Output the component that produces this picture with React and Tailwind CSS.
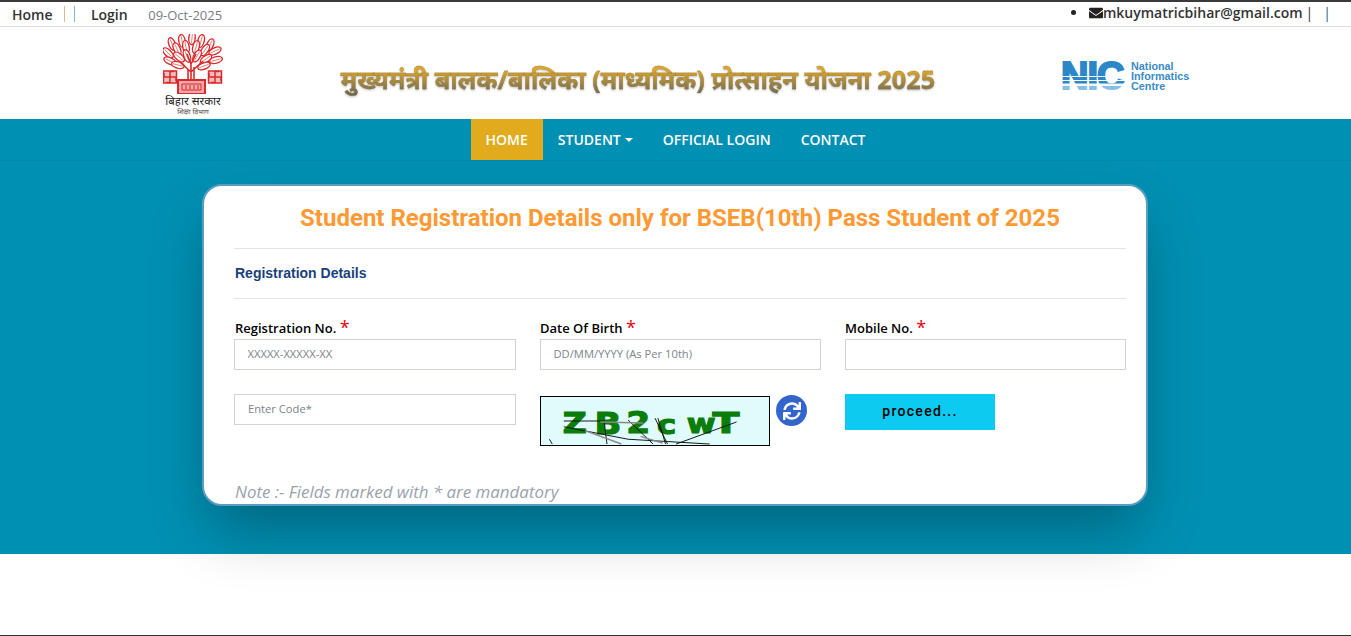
import React from 'react';
import { FaEnvelope, FaSync } from 'react-icons/fa';

const openSans = "font-['Open_Sans',sans-serif]";
const hindi = "font-['Noto_Sans','Noto_Sans_Devanagari','Lohit_Devanagari',sans-serif]";

function Emblem() {
  const leaves = [
    [9, 10, -20], [19, 7, -10], [29, 4, 5], [38, 7, 15], [47, 11, 25],
    [5, 19, -45], [14, 15, -25], [23, 13, -10], [33, 13, 15], [42, 16, 35], [52, 17, 65],
    [7, 27, -65], [16, 23, -50], [24, 22, -20], [34, 22, 30], [43, 25, 55], [53, 26, 75],
    [15, 31, -75], [41, 32, 70],
  ];
  return (
    <svg width="60" height="60" viewBox="0 0 60 60" fill="none" className="block">
      {leaves.map(([x, y, r], i) => (
        <g key={i} transform={`rotate(${r} ${x} ${y})`}>
          <ellipse cx={x} cy={y} rx="3.2" ry="6.5" fill="#fff" stroke="#d92b2b" strokeWidth="1.4" />
          <path d={`M${x} ${y - 5}V${y + 5}`} stroke="#e66" strokeWidth="0.8" />
        </g>
      ))}
      <path d="M28 47V30M28 38L17 28M28 38L40 27M25 47V35M31 47V33M28 30L24 20M28 30L33 20" stroke="#d92b2b" strokeWidth="1.6" />
      <rect x="15" y="46" width="27" height="14" fill="#f2a8a8" stroke="#d92b2b" strokeWidth="2" />
      <path d="M19 50h19v6H19zM23 51v4M27 51v4M31 51v4M35 51v4" stroke="#d92b2b" strokeWidth="1" />
      <g stroke="#d92b2b" strokeWidth="1.5">
        <rect x="0.5" y="37" width="13" height="12" fill="#f7bcbc" />
        <path d="M7 37v12M0.5 43h13M7 37.5h4M13 43v4M7 48.5H3M1 43v-4" />
        <rect x="45.5" y="37" width="13" height="12" fill="#f7bcbc" />
        <path d="M52 37v12M45.5 43h13M52 37.5h4M58 43v4M52 48.5h-4M46 43v-4" />
      </g>
    </svg>
  );
}

function NicLogo() {
  return (
    <div className="flex items-center">
      <div className="relative h-[30px] w-[71px]">
        <span className="block pl-px font-['Liberation_Sans',sans-serif] text-[38px] leading-[30px] font-bold tracking-[-1px] text-[#2b87c8] [-webkit-text-stroke:2px_#2b87c8]">
          NIC
        </span>
        <div className="absolute inset-x-0 top-[15px] flex flex-col gap-[3px]">
          <div className="h-px bg-white" />
          <div className="h-px bg-white" />
          <div className="h-[2px] bg-white/90" />
        </div>
        <div className="absolute inset-x-0 bottom-0 h-[8px] bg-white/45" />
      </div>
      <div className="font-['Liberation_Sans',sans-serif] text-[10.8px] leading-[10px] font-bold text-[#3b8bc6]">
        <div>National</div>
        <div>Informatics</div>
        <div>Centre</div>
      </div>
    </div>
  );
}

function Captcha() {
  return (
    <svg width="230" height="50" viewBox="0 0 230 50" className="box-border block border border-black bg-[#e0fbfb]">
      <g fontFamily="DejaVu Sans, sans-serif" fontWeight="700" fill="#0a7d0a" stroke="#0a7d0a" strokeWidth="1.2">
        <text x="19" y="37" fontSize="29" textLength="25" lengthAdjust="spacingAndGlyphs">Z</text>
        <text x="52" y="39" fontSize="32" textLength="28" lengthAdjust="spacingAndGlyphs">B</text>
        <text x="85" y="38" fontSize="32" textLength="25" lengthAdjust="spacingAndGlyphs">2</text>
        <text x="117" y="39" fontSize="27" textLength="20" lengthAdjust="spacingAndGlyphs">c</text>
        <text x="148" y="37" fontSize="27" textLength="30" lengthAdjust="spacingAndGlyphs">w</text>
        <text x="175" y="37" fontSize="30" textLength="28" lengthAdjust="spacingAndGlyphs">T</text>
      </g>
      <g fill="none" stroke="#111" strokeWidth="1">
        <path d="M20 25H63M20 31L87 44L172 49M62 26L65 49M87 24L113 49M115 22L128 49M118 22L126 49M137 49L200 26M5 44L8 49" />
        <path d="M58 26L103 27M42 35L80 49M100 41L123 48" stroke="#888" strokeWidth="1.5" />
      </g>
    </svg>
  );
}

function Field({ label, placeholder, indent }) {
  return (
    <div className="flex flex-col">
      <label className={`${openSans} flex h-[21px] items-end pb-[2px] text-[13px] leading-[18px] font-semibold text-black ${indent ? 'pl-px' : ''}`}>
        {label}&nbsp;<span className="text-[18px] leading-[20px] font-normal text-red-600">*</span>
      </label>
      <input
        placeholder={placeholder}
        className={`${openSans} h-[31px] border border-[#ced4da] pr-[13px] pb-[2px] pl-[12.5px] text-[11.2px] text-[#495057] outline-none placeholder:text-[#7b838b]`}
      />
    </div>
  );
}

export default function App() {
  return (
    <div className={`${openSans} relative h-[636px] overflow-hidden border-b border-[#333] bg-white`}>
      {/* top strip */}
      <div className="flex h-[27px] justify-between border-t-2 border-b border-t-[#3a3a3a] border-b-[#ddd] text-[14px] text-[#333]">
        <div className="flex items-center pl-3">
          <span className="font-semibold">Home</span>
          <span className="ml-[11px] h-[16px] w-px bg-[#e8b48c]" />
          <span className="ml-[9px] h-[16px] w-px bg-[#7fb2dc]" />
          <span className="ml-[16.4px] font-semibold">Login</span>
          <span className="mt-[3px] ml-[20.6px] text-[13px] text-[#777e85]">09-Oct-2025</span>
        </div>
        <div className="flex items-center pr-[20px] pb-[3px] font-semibold">
          <span className="mr-[13px] h-[5px] w-[5px] rounded-full bg-[#222]" />
          <FaEnvelope className="text-[14px] text-[#222]" />
          <span>mkuymatricbihar@gmail.com</span>
          <span className="ml-[3px] font-normal">|</span>
          <span className="ml-[10px] font-normal text-[#1a5e90]">|</span>
        </div>
      </div>

      {/* logo row */}
      <div className="flex h-[92px] items-center">
        <div className="ml-[163px] flex w-[60px] flex-col items-center pt-[4px]">
          <Emblem />
          <div className={`${hindi} text-[11.5px] leading-[13px] whitespace-nowrap text-[#222]`}>बिहार सरकार</div>
          <div className={`${hindi} text-[7px] leading-[9px] whitespace-nowrap text-[#444]`}>शिक्षा विभाग</div>
        </div>
        <div className={`${hindi} mt-[14px] ml-[117px] w-[596px] bg-[linear-gradient(#dca62c_25%,#6f6a55_85%)] bg-clip-text text-center text-[25.3px] font-bold whitespace-nowrap text-transparent drop-shadow-[0.5px_1px_1px_rgba(0,0,0,0.25)] [-webkit-text-stroke:0.3px_rgba(140,120,60,0.7)]`}>
          मुख्यमंत्री बालक/बालिका (माध्यमिक) प्रोत्साहन योजना 2025
        </div>
        <div className="ml-[124px] pt-[6px]">
          <NicLogo />
        </div>
      </div>

      {/* nav */}
      <nav className="flex h-[42px] justify-center border-b border-[#0089ab] bg-[#0090b3] text-[14px] font-semibold text-white">
        <div className="flex">
          <a className="flex h-[41px] items-center bg-[#e2ab1e] px-[15px]">HOME</a>
          <a className="flex h-[41px] items-center px-[15px]">
            STUDENT
            <span className="ml-[4px] h-0 w-0 border-x-[4px] border-t-[4px] border-x-transparent border-t-white" />
          </a>
          <a className="flex h-[41px] items-center px-[15px]">OFFICIAL LOGIN</a>
          <a className="flex h-[41px] items-center px-[15px]">CONTACT</a>
        </div>
      </nav>

      {/* main */}
      <main className="h-[393px] bg-[#0090b3] pt-[23px]">
        <section className="relative ml-[202px] h-[322px] w-[946px] overflow-hidden rounded-[20px] border-2 border-[#5a9cc2] bg-white pr-[20px] pl-[30px] shadow-[0_30px_60px_-8px_rgba(0,0,0,0.3)]">
          <h1 className="border-b border-[#e2e4e8] pt-[15px] pb-[12px] text-center font-['Roboto',sans-serif] text-[24px] leading-[35px] font-bold text-[#ff9933]">
            Student Registration Details only for BSEB(10th) Pass Student of 2025
          </h1>
          <h2 className="flex h-[50px] items-center border-b border-[#e2e4e8] pl-px font-['Liberation_Sans',sans-serif] text-[14px] font-bold text-[#1a3f7d]">
            Registration Details
          </h2>
          <div className="mt-[19px] grid grid-cols-[282px_281px_281px] gap-x-[24px]">
            <Field label="Registration No." placeholder="XXXXX-XXXXX-XX" indent />
            <Field label="Date Of Birth" placeholder="DD/MM/YYYY (As Per 10th)" />
            <Field label="Mobile No." placeholder="" />
          </div>
          <div className="mt-[24px] grid grid-cols-[282px_281px_281px] gap-x-[24px]">
            <input
              placeholder="Enter Code*"
              className={`${openSans} h-[31px] border border-[#ced4da] pr-[13px] pb-[2px] pl-[13px] text-[11.2px] outline-none placeholder:text-[#7b838b]`}
            />
            <div className="flex items-start pt-[2px]">
              <Captcha />
              <span className="-mt-[1px] ml-[6px] flex h-[31px] w-[31px] items-center justify-center rounded-full bg-[#3366cc]">
                <FaSync className="text-[18px] text-white" />
              </span>
            </div>
            <div>
              <button className="h-[36px] w-[150px] bg-[#0dcaf0] pb-[2px] font-['Roboto',sans-serif] text-[14px] font-medium tracking-[1.3px] text-black">
                proceed...
              </button>
            </div>
          </div>
          <p className="mt-[34px] pl-px text-[16.9px] leading-[24px] text-[#98a2ad] italic">
            Note :- Fields marked with * are mandatory
          </p>
        </section>
      </main>
    </div>
  );
}
